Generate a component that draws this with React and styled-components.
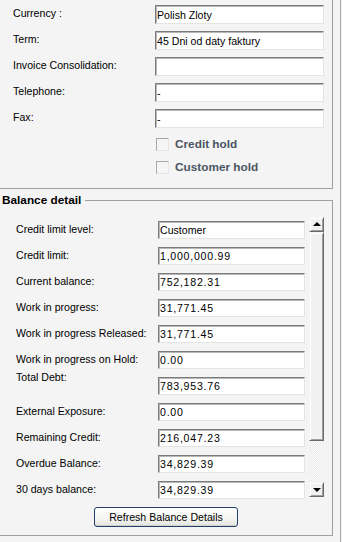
import React from "react";
import styled, { createGlobalStyle } from "styled-components";

const GlobalStyle = createGlobalStyle`
  html, body { margin: 0; padding: 0; background: #f4f4f4; }
  body {
    font-family: "Liberation Sans", Arial, sans-serif;
    font-size: 10.6px;
    color: #000;
  }
  * { box-sizing: border-box; }
`;

const Page = styled.div`
  width: 341px;
  height: 542px;
  border-right: 1px solid #a9a9a9;
  display: flex;
  flex-direction: column;
  overflow: hidden;
`;

const TopPanel = styled.section`
  width: 333px;
  height: 189px;
  flex: none;
  border-right: 1px solid #a0a0a0;
  border-bottom: 1px solid #a0a0a0;
  padding: 5px 0 0 13px;
  display: flex;
  flex-direction: column;
  gap: 7px;
`;

const FieldRow = styled.div`
  display: grid;
  grid-template-columns: ${(p) => p.$labelWidth}px ${(p) => p.$inputWidth}px;
  align-items: center;
`;

const Label = styled.span`
  line-height: 13px;
  white-space: nowrap;
  ${(p) =>
    p.$lift
      ? "align-self: start; margin-top: -6px;"
      : "padding-bottom: 2px;"}
`;

const TextBox = styled.input`
  height: ${(p) => p.$height}px;
  width: 100%;
  margin: 0;
  padding: 0 0 0 1px;
  background: #fff;
  border: 1px solid;
  border-color: #7b7b7b #e4e4e4 #e4e4e4 #7b7b7b;
  box-shadow: inset 1px 1px 0 #b8b8b8;
  border-radius: 0;
  font-family: "Liberation Sans", Arial, sans-serif;
  font-size: 10.6px;
  letter-spacing: ${(p) => (p.$numeric ? "0.75px" : "0")};
  color: #000;
  outline: none;
`;

const CheckList = styled.div`
  display: flex;
  flex-direction: column;
  gap: 10px;
  margin-top: 3px;
  padding-left: 143px;
`;

const CheckRow = styled.label`
  display: flex;
  align-items: center;
  gap: 6px;
  height: 13px;
`;

const CheckBox = styled.span`
  width: 13px;
  height: 13px;
  flex: none;
  background: #f5f5f5;
  border: 1px solid;
  border-color: #a8a8a8 #e6e6e6 #e6e6e6 #a8a8a8;
`;

const CheckText = styled.span`
  font-weight: bold;
  font-size: 11.8px;
  line-height: 13px;
  color: #4a5563;
`;

const Fieldset = styled.fieldset`
  width: 333px;
  flex: none;
  margin: 5px 0 0;
  padding: 10px 0 8px;
  min-width: 0;
  border: 1px solid #a0a0a0;
  border-left: none;
`;

const Legend = styled.legend`
  padding: 0 4px 0 2px;
  margin: 0;
  font-weight: bold;
  font-size: 11.8px;
  line-height: 13px;
`;

const ScrollArea = styled.div`
  display: flex;
  align-items: flex-start;
  gap: 4px;
  padding-left: 16px;
`;

const RowList = styled.div`
  display: flex;
  flex-direction: column;
  gap: 8px;
  padding-top: 4px;
  width: 289px;
`;

const ScrollBar = styled.div`
  width: 15px;
  height: 280px;
  display: flex;
  flex-direction: column;
`;

const Raised = styled.div`
  background: #f1f1f1;
  border: 1px solid;
  border-color: #f4f4f4 #6a6a6a #6a6a6a #f4f4f4;
  box-shadow: inset 1px 1px 0 #ffffff, inset -1px -1px 0 #a0a0a0;
`;

const ArrowButton = styled(Raised)`
  height: 15px;
  flex: none;
  display: flex;
  align-items: center;
  justify-content: center;
  &::after {
    content: "";
    width: 0;
    height: 0;
    border-left: 4px solid transparent;
    border-right: 4px solid transparent;
    ${(p) =>
      p.$dir === "up"
        ? "border-bottom: 4px solid #000; margin-top: -1px;"
        : "border-top: 4px solid #000; margin-top: 1px;"}
  }
`;

const Thumb = styled(Raised)`
  height: 209px;
  flex: none;
`;

const Track = styled.div`
  flex: 1;
  background: repeating-conic-gradient(#e9e9e9 0 25%, #fdfdfd 0 50%) 0 0 / 2px 2px;
`;

const ButtonRow = styled.div`
  display: flex;
  justify-content: center;
  padding-top: 8px;
`;

const PushButton = styled.button`
  width: 144px;
  height: 20px;
  margin: 0;
  padding: 0;
  border: 1px solid #21416c;
  border-radius: 3px;
  background: linear-gradient(#ffffff 0%, #f6f6f4 55%, #e2e2de 100%);
  box-shadow: inset 0 -1px 0 #d0d0cc;
  font-family: "Liberation Sans", Arial, sans-serif;
  font-size: 10.6px;
  color: #000;
`;

const topFields = [
  { label: "Currency :", value: "Polish Zloty" },
  { label: "Term:", value: "45 Dni od daty faktury" },
  { label: "Invoice Consolidation:", value: "" },
  { label: "Telephone:", value: "-" },
  { label: "Fax:", value: "-" },
];

const balanceFields = [
  { label: "Credit limit level:", value: "Customer" },
  { label: "Credit limit:", value: "1,000,000.99", numeric: true },
  { label: "Current balance:", value: "752,182.31", numeric: true },
  { label: "Work in progress:", value: "31,771.45", numeric: true },
  { label: "Work in progress Released:", value: "31,771.45", numeric: true },
  { label: "Work in progress on Hold:", value: "0.00", numeric: true },
  { label: "Total Debt:", value: "783,953.76", numeric: true, lift: true },
  { label: "External Exposure:", value: "0.00", numeric: true },
  { label: "Remaining Credit:", value: "216,047.23", numeric: true },
  { label: "Overdue Balance:", value: "34,829.39", numeric: true },
  { label: "30 days balance:", value: "34,829.39", numeric: true },
];

export default function App() {
  return (
    <>
      <GlobalStyle />
      <Page>
        <TopPanel>
          {topFields.map((f) => (
            <FieldRow key={f.label} $labelWidth={142} $inputWidth={169}>
              <Label>{f.label}</Label>
              <TextBox $height={19} readOnly value={f.value} />
            </FieldRow>
          ))}
          <CheckList>
            <CheckRow>
              <CheckBox />
              <CheckText>Credit hold</CheckText>
            </CheckRow>
            <CheckRow>
              <CheckBox />
              <CheckText>Customer hold</CheckText>
            </CheckRow>
          </CheckList>
        </TopPanel>
        <Fieldset>
          <Legend>Balance detail</Legend>
          <ScrollArea>
            <RowList>
              {balanceFields.map((f) => (
                <FieldRow key={f.label} $labelWidth={142} $inputWidth={147}>
                  <Label $lift={f.lift}>{f.label}</Label>
                  <TextBox
                    $height={18}
                    $numeric={f.numeric}
                    readOnly
                    value={f.value}
                  />
                </FieldRow>
              ))}
            </RowList>
            <ScrollBar>
              <ArrowButton $dir="up" />
              <Thumb />
              <Track />
              <ArrowButton $dir="down" />
            </ScrollBar>
          </ScrollArea>
          <ButtonRow>
            <PushButton type="button">Refresh Balance Details</PushButton>
          </ButtonRow>
        </Fieldset>
      </Page>
    </>
  );
}
